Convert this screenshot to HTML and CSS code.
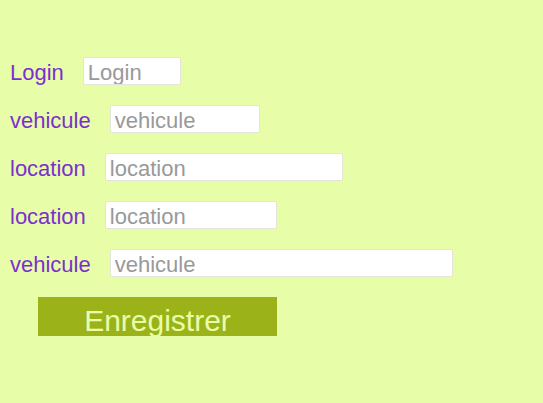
FILE: index.html
```html
<!DOCTYPE html>
<html>
<head>
<meta charset="utf-8">
<link rel="stylesheet" href="styles.css">
</head>
<body>
<form class="form">
  <div class="row"><label class="lbl">Login</label><input class="field w-login" placeholder="Login"></div>
  <div class="row"><label class="lbl">vehicule</label><input class="field w-veh1" placeholder="vehicule"></div>
  <div class="row"><label class="lbl">location</label><input class="field w-loc1" placeholder="location"></div>
  <div class="row"><label class="lbl">location</label><input class="field w-loc2" placeholder="location"></div>
  <div class="row"><label class="lbl">vehicule</label><input class="field w-veh2" placeholder="vehicule"></div>
  <div class="actions"><button type="button" class="btn">Enregistrer</button></div>
</form>
</body>
</html>
```
FILE: styles.css
```css
html, body {
  margin: 0;
  padding: 0;
  background: #e8fda8;
  height: 100%;
}
body {
  font-family: "Liberation Sans", Arial, sans-serif;
}
.form {
  display: flex;
  flex-direction: column;
  gap: 20px;
  padding: 57px 0 0 10px;
}
.row {
  display: flex;
  align-items: center;
  gap: 19px;
  height: 28px;
}
.lbl {
  color: #7a30d0;
  font-size: 22px;
  padding-top: 3px;
}
.field {
  box-sizing: border-box;
  height: 28px;
  border: 1px solid #e2e6d8;
  border-radius: 2px;
  background: #fff;
  font-family: "Liberation Sans", Arial, sans-serif;
  font-size: 22px;
  padding: 3px 4px 0;
  margin: 0;
  outline: none;
}
.field::placeholder {
  color: #999;
}
.w-login { width: 98px; }
.w-veh1 { width: 150px; }
.w-loc1 { width: 238px; }
.w-loc2 { width: 172px; }
.w-veh2 { width: 343px; }
.actions {
  padding-left: 28px;
}
.btn {
  width: 239px;
  height: 39px;
  border: none;
  background: #9bb318;
  color: #e8fda8;
  font-family: "Liberation Sans", Arial, sans-serif;
  font-size: 30px;
  padding: 8px 0 0;
  margin: 0;
  line-height: 32px;
}
```
